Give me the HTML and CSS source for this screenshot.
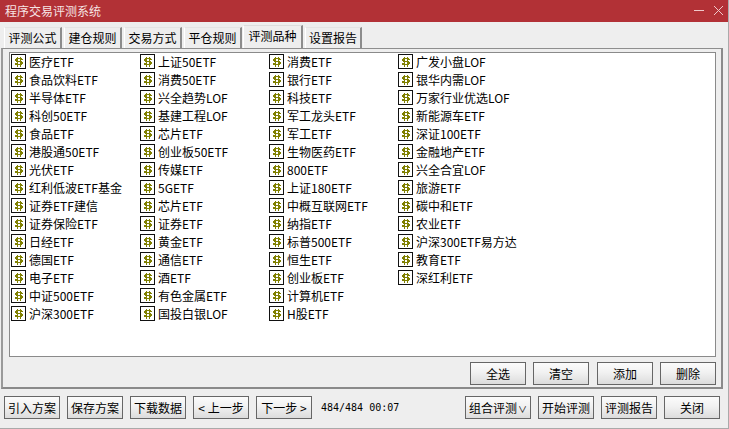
FILE: index.html
```html
<!DOCTYPE html>
<html lang="zh-CN">
<head>
<meta charset="utf-8">
<title>程序交易评测系统</title>
<link rel="stylesheet" href="styles.css">
</head>
<body>
<svg class="defs" width="0" height="0" aria-hidden="true">
  <symbol id="coin" viewBox="0 0 15 15">
    <rect x="0.5" y="0.5" width="14" height="14" fill="#fff" stroke="#111"/>
    <path shape-rendering="crispEdges" d="M5 4h6v1H5zM4 5h2v2H4zM10 5h2v1h-2zM5 7h6v1H5zM10 8h2v2h-2zM4 9h2v1H4zM4 10h7v1H4zM6 3h1v10H6zM9 3h1v10H9z" fill="#808000"/>
  </symbol>
</svg>
<div class="window">
  <header class="titlebar">
    <span class="title">程序交易评测系统</span>
    <span class="controls">
      <svg width="11" height="11" viewBox="0 0 11 11"><path d="M0 5.5H10" stroke="#f0c8ca" fill="none"/></svg>
      <svg width="11" height="11" viewBox="0 0 11 11"><path d="M1 1L10 10M10 1L1 10" stroke="#f0c8ca" fill="none"/></svg>
    </span>
  </header>
  <nav class="tabs">
    <span class="tab">评测公式</span>
    <span class="tab">建仓规则</span>
    <span class="tab">交易方式</span>
    <span class="tab">平仓规则</span>
    <span class="tab active">评测品种</span>
    <span class="tab last">设置报告</span>
  </nav>
  <section class="pane">
    <div class="list">
      <div class="item"><svg class="ic"><use href="#coin"/></svg>医疗ETF</div>
      <div class="item"><svg class="ic"><use href="#coin"/></svg>食品饮料ETF</div>
      <div class="item"><svg class="ic"><use href="#coin"/></svg>半导体ETF</div>
      <div class="item"><svg class="ic"><use href="#coin"/></svg>科创50ETF</div>
      <div class="item"><svg class="ic"><use href="#coin"/></svg>食品ETF</div>
      <div class="item"><svg class="ic"><use href="#coin"/></svg>港股通50ETF</div>
      <div class="item"><svg class="ic"><use href="#coin"/></svg>光伏ETF</div>
      <div class="item"><svg class="ic"><use href="#coin"/></svg>红利低波ETF基金</div>
      <div class="item"><svg class="ic"><use href="#coin"/></svg>证券ETF建信</div>
      <div class="item"><svg class="ic"><use href="#coin"/></svg>证券保险ETF</div>
      <div class="item"><svg class="ic"><use href="#coin"/></svg>日经ETF</div>
      <div class="item"><svg class="ic"><use href="#coin"/></svg>德国ETF</div>
      <div class="item"><svg class="ic"><use href="#coin"/></svg>电子ETF</div>
      <div class="item"><svg class="ic"><use href="#coin"/></svg>中证500ETF</div>
      <div class="item"><svg class="ic"><use href="#coin"/></svg>沪深300ETF</div>

      <div class="item"><svg class="ic"><use href="#coin"/></svg>上证50ETF</div>
      <div class="item"><svg class="ic"><use href="#coin"/></svg>消费50ETF</div>
      <div class="item"><svg class="ic"><use href="#coin"/></svg>兴全趋势LOF</div>
      <div class="item"><svg class="ic"><use href="#coin"/></svg>基建工程LOF</div>
      <div class="item"><svg class="ic"><use href="#coin"/></svg>芯片ETF</div>
      <div class="item"><svg class="ic"><use href="#coin"/></svg>创业板50ETF</div>
      <div class="item"><svg class="ic"><use href="#coin"/></svg>传媒ETF</div>
      <div class="item"><svg class="ic"><use href="#coin"/></svg>5GETF</div>
      <div class="item"><svg class="ic"><use href="#coin"/></svg>芯片ETF</div>
      <div class="item"><svg class="ic"><use href="#coin"/></svg>证券ETF</div>
      <div class="item"><svg class="ic"><use href="#coin"/></svg>黄金ETF</div>
      <div class="item"><svg class="ic"><use href="#coin"/></svg>通信ETF</div>
      <div class="item"><svg class="ic"><use href="#coin"/></svg>酒ETF</div>
      <div class="item"><svg class="ic"><use href="#coin"/></svg>有色金属ETF</div>
      <div class="item"><svg class="ic"><use href="#coin"/></svg>国投白银LOF</div>

      <div class="item"><svg class="ic"><use href="#coin"/></svg>消费ETF</div>
      <div class="item"><svg class="ic"><use href="#coin"/></svg>银行ETF</div>
      <div class="item"><svg class="ic"><use href="#coin"/></svg>科技ETF</div>
      <div class="item"><svg class="ic"><use href="#coin"/></svg>军工龙头ETF</div>
      <div class="item"><svg class="ic"><use href="#coin"/></svg>军工ETF</div>
      <div class="item"><svg class="ic"><use href="#coin"/></svg>生物医药ETF</div>
      <div class="item"><svg class="ic"><use href="#coin"/></svg>800ETF</div>
      <div class="item"><svg class="ic"><use href="#coin"/></svg>上证180ETF</div>
      <div class="item"><svg class="ic"><use href="#coin"/></svg>中概互联网ETF</div>
      <div class="item"><svg class="ic"><use href="#coin"/></svg>纳指ETF</div>
      <div class="item"><svg class="ic"><use href="#coin"/></svg>标普500ETF</div>
      <div class="item"><svg class="ic"><use href="#coin"/></svg>恒生ETF</div>
      <div class="item"><svg class="ic"><use href="#coin"/></svg>创业板ETF</div>
      <div class="item"><svg class="ic"><use href="#coin"/></svg>计算机ETF</div>
      <div class="item"><svg class="ic"><use href="#coin"/></svg>H股ETF</div>

      <div class="item"><svg class="ic"><use href="#coin"/></svg>广发小盘LOF</div>
      <div class="item"><svg class="ic"><use href="#coin"/></svg>银华内需LOF</div>
      <div class="item"><svg class="ic"><use href="#coin"/></svg>万家行业优选LOF</div>
      <div class="item"><svg class="ic"><use href="#coin"/></svg>新能源车ETF</div>
      <div class="item"><svg class="ic"><use href="#coin"/></svg>深证100ETF</div>
      <div class="item"><svg class="ic"><use href="#coin"/></svg>金融地产ETF</div>
      <div class="item"><svg class="ic"><use href="#coin"/></svg>兴全合宜LOF</div>
      <div class="item"><svg class="ic"><use href="#coin"/></svg>旅游ETF</div>
      <div class="item"><svg class="ic"><use href="#coin"/></svg>碳中和ETF</div>
      <div class="item"><svg class="ic"><use href="#coin"/></svg>农业ETF</div>
      <div class="item"><svg class="ic"><use href="#coin"/></svg>沪深300ETF易方达</div>
      <div class="item"><svg class="ic"><use href="#coin"/></svg>教育ETF</div>
      <div class="item"><svg class="ic"><use href="#coin"/></svg>深红利ETF</div>
    </div>
    <div class="pane-actions">
      <button class="btn">全选</button>
      <button class="btn">清空</button>
      <button class="btn wide-gap">添加</button>
      <button class="btn">删除</button>
    </div>
  </section>
  <footer class="footer">
    <button class="btn">引入方案</button>
    <button class="btn">保存方案</button>
    <button class="btn">下载数据</button>
    <button class="btn">&lt; 上一步</button>
    <button class="btn">下一步 &gt;</button>
    <span class="status">484/484 00:07</span>
    <button class="btn wide">组合评测<span class="caret">∨</span></button>
    <button class="btn">开始评测</button>
    <button class="btn">评测报告</button>
    <button class="btn">关闭</button>
  </footer>
</div>
</body>
</html>
```
FILE: styles.css
```css
* { box-sizing: border-box; }
html, body { margin: 0; padding: 0; }
body {
  width: 729px;
  height: 429px;
  overflow: hidden;
  background: #eeeeee;
  font-family: "Noto Sans CJK SC", "Liberation Sans", sans-serif;
  font-size: 12px;
  color: #000;
}
.defs { display: block; height: 0; }
.window {
  width: 729px;
  height: 429px;
  display: flex;
  flex-direction: column;
  background: #eeeeee;
  border-right: 1px solid #aaa;
  border-bottom: 1px solid #aaa;
}
.titlebar {
  height: 22px;
  flex: none;
  background: #b23136;
  color: #f6e4e4;
  display: flex;
  align-items: center;
  justify-content: space-between;
  padding: 0 4px 0 5px;
}
.title { font-size: 12px; line-height: 22px; }
.controls { display: flex; gap: 8px; margin-bottom: 2px; }
.controls svg { display: block; }
.tabs {
  height: 26px;
  flex: none;
  display: flex;
  align-items: flex-end;
  padding-left: 4px;
  gap: 2px;
}
.tab {
  width: 58px;
  height: 21px;
  text-align: center;
  line-height: 20px;
  border-top: 1px solid #e4e4e4;
  border-left: 1px solid #fff;
  border-right: 2px solid #8c8c8c;
  background: #eeeeee;
}
.tab.active {
  height: 23px;
  width: 60px;
  line-height: 19px;
  margin-left: -1px;
  border-top-color: #ddd;
  padding-bottom: 2px;
}
.tab.last { width: 57px; }
.pane {
  flex: none;
  margin-left: 1px;
  width: 722px;
  height: 341px;
  border-top: 1px solid #8e8e8e;
  border-left: 2px solid #9a9a9a;
  border-right: 2px solid #8a8a8a;
  border-bottom: 2px solid #8a8a8a;
  padding: 3px 6px 0 6px;
}
.list {
  width: 707px;
  height: 305px;
  background: #fff;
  border: 1px solid #8a8a8a;
  display: grid;
  grid-auto-flow: column;
  grid-template-rows: repeat(15, 18px);
  grid-template-columns: repeat(4, 129px);
  padding: 0 0 0 1px;
  align-content: start;
}
.item {
  display: flex;
  align-items: flex-start;
  gap: 3px;
  height: 18px;
  white-space: nowrap;
  line-height: 18px;
}
.ic { width: 15px; height: 15px; flex: none; display: block; margin-top: 1px; }
.pane-actions {
  display: flex;
  justify-content: flex-end;
  gap: 7px;
  margin-top: 5px;
  width: 707px;
}
.wide-gap { margin-left: 1px; }
.btn {
  width: 56px;
  height: 23px;
  padding: 0;
  font: inherit;
  line-height: 21px;
  color: #000;
  border: 1px solid #666;
  border-radius: 0;
  background: linear-gradient(#fbfbfb, #f1f1f1 45%, #dcdcdc);
  white-space: nowrap;
}
.btn.wide { width: 66px; }
.caret { font-size: 9px; margin-left: 1px; }
.footer {
  flex: none;
  display: flex;
  align-items: center;
  gap: 7px;
  padding: 7px 0 0 4px;
}
.status {
  font-family: "DejaVu Sans Mono", monospace;
  font-size: 10px;
  width: 137px;
  margin-left: 2px;
}
```
